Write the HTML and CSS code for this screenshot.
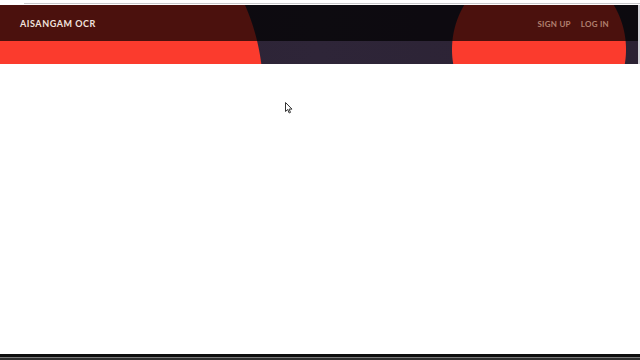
FILE: index.html
```html
<!DOCTYPE html>
<html lang="en">
<head>
<meta charset="utf-8">
<title>Aisangam OCR</title>
<link rel="stylesheet" href="styles.css">
</head>
<body>
  <div class="chrome"><div class="chrome-line"></div></div>
  <header class="hero">
    <nav class="nav">
      <a class="brand" href="#">AISANGAM OCR</a>
      <div class="links">
        <a href="#">SIGN UP</a>
        <a href="#">LOG IN</a>
      </div>
    </nav>
  </header>
  <main class="content"></main>
  <div class="taskbar"></div>
  <svg class="cursor" width="8" height="12" viewBox="0 0 8 12">
    <path d="M0.5 0.5 L0.5 9.5 L2.7 7.5 L4.2 11 L5.5 10.4 L4.1 7.1 L7 7.1 Z" fill="#fff" stroke="#333" stroke-width="1" stroke-linejoin="round"/>
  </svg>
</body>
</html>
```
FILE: styles.css
```css
html, body {
  margin: 0;
  padding: 0;
  background: #ffffff;
}
body {
  width: 640px;
  height: 360px;
  overflow: hidden;
  position: relative;
  display: flex;
  flex-direction: column;
  font-family: Lato, "Open Sans", sans-serif;
}
.chrome {
  height: 5px;
  background: #ffffff;
  display: flex;
  align-items: flex-end;
  padding-left: 24px;
  padding-bottom: 1px;
  box-sizing: border-box;
}
.chrome-line {
  flex: 1;
  height: 1px;
  background: #c9c9cc;
}
.hero {
  height: 59px;
  box-sizing: border-box;
  border-right: 2px solid #d4d3d8;
  background:
    radial-gradient(circle 214px at 49px 86px, #fb3b2d 213.5px, rgba(251,59,45,0) 214.5px),
    radial-gradient(circle 87px at 539px 44.5px, #fb3b2d 86.5px, rgba(251,59,45,0) 87.5px),
    linear-gradient(90deg, #2b2233, #2e2538 50%, #2b2233);
}
.nav {
  height: 36px;
  background: rgba(0, 0, 0, 0.7);
  display: flex;
  align-items: center;
  justify-content: space-between;
  padding: 1px 29px 0 20px;
  box-sizing: border-box;
}
.brand {
  color: #f1e2de;
  font-weight: 700;
  font-size: 9px;
  letter-spacing: 0.55px;
  text-decoration: none;
}
.links {
  display: flex;
  gap: 10px;
}
.links a {
  color: #b2806f;
  font-weight: 700;
  font-size: 8px;
  letter-spacing: 0.25px;
  text-decoration: none;
}
.content {
  flex: 1;
}
.taskbar {
  height: 6px;
  background: linear-gradient(#0e0e0e 0, #0e0e0e 3px, #7a7a7a 3px, #7a7a7a 4px, #2e2e2e 4px);
}
.cursor {
  position: absolute;
  left: 285px;
  top: 102px;
}
```
